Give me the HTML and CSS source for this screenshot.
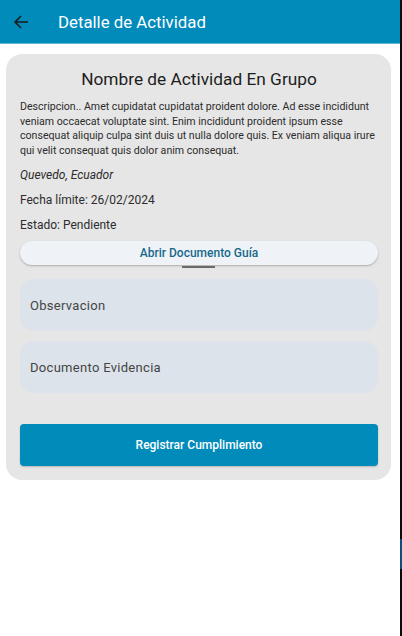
FILE: index.html
```html
<!DOCTYPE html>
<html lang="es">
<head>
<meta charset="utf-8">
<link rel="stylesheet" href="styles.css">
</head>
<body>
<div class="screen">
  <header class="appbar">
    <svg class="back" width="16" height="16" viewBox="0 0 16 16"><path d="M15 8H2M8 2L2 8l6 6" fill="none" stroke="#1b1b1b" stroke-width="1.6"/></svg>
    <h1 class="appbar-title">Detalle de Actividad</h1>
  </header>
  <main class="content">
    <section class="card">
      <h2 class="card-title">Nombre de Actividad En Grupo</h2>
      <p class="desc">Descripcion.. Amet cupidatat cupidatat proident dolore. Ad esse incididunt veniam occaecat voluptate sint. Enim incididunt proident ipsum esse consequat aliquip culpa sint duis ut nulla dolore quis. Ex veniam aliqua irure qui velit consequat quis dolor anim consequat.</p>
      <p class="info italic">Quevedo, Ecuador</p>
      <p class="info">Fecha límite: 26/02/2024</p>
      <p class="info">Estado: Pendiente</p>
      <div class="guide-wrap">
        <button class="guide">Abrir Documento Guía</button>
        <span class="indicator"></span>
      </div>
      <div class="field">Observacion</div>
      <div class="field">Documento Evidencia</div>
      <button class="submit">Registrar Cumplimiento</button>
    </section>
  </main>
  <div class="edge"><span class="edge-blue"></span></div>
</div>
</body>
</html>
```
FILE: styles.css
```css
* { box-sizing: border-box; }
html, body { margin: 0; padding: 0; background: #fff; }
body { font-family: Roboto, "Noto Sans", sans-serif; width: 402px; height: 636px; overflow: hidden; }
.screen { position: relative; width: 402px; height: 636px; }
.edge { position: absolute; top: 0; right: 0; width: 2px; height: 636px; background: #0b0b0b; }
.edge-blue { position: absolute; top: 539px; left: 0; width: 2px; height: 30px; background: #0d4d80; }
.appbar { height: 44px; width: 400px; background: #008bbb; display: flex; align-items: center; border-bottom: 1px solid #5fb6d6; }
.back { margin-left: 13px; }
.appbar-title { margin: 0 0 0 29px; font-size: 16.8px; font-weight: 400; color: #fff; }
.content { padding: 10px 11px 0 6px; }
.card { background: #e6e6e6; border-radius: 16px; padding: 13px 13px 14px 14px; display: flex; flex-direction: column; }
.card-title { margin: 0; text-align: center; font-size: 17.3px; font-weight: 400; color: #1e1e1e; line-height: 24px; }
.desc { margin: 9px 0 0; font-size: 10.6px; line-height: 14.5px; color: #2c2c2c; }
.info { margin: 7px 0 0; font-size: 12px; line-height: 18px; color: #2c2c2c; }
.info + .info { margin-top: 7px; }
.italic { font-style: italic; margin-top: 8px; }
.guide-wrap { position: relative; margin-top: 7px; }
.guide { display: block; width: 100%; height: 24px; border: none; border-radius: 12px; background: #eff3f7; color: #17698c; font-family: inherit; font-size: 12px; font-weight: 500; box-shadow: 0 1px 2px rgba(0,0,0,0.25); }
.indicator { position: absolute; left: 162px; top: 25px; width: 33px; height: 2px; background: #6a6a6a; }
.field { margin-top: 14px; height: 52px; border-radius: 14px; background: #dce3ea; display: flex; align-items: center; padding-left: 10px; font-size: 13px; letter-spacing: 0.3px; color: #454545; }
.field + .field { margin-top: 10px; }
.submit { margin-top: 31px; height: 42px; border: none; border-radius: 4px; background: #008bbb; color: #fff; font-family: inherit; font-size: 12px; font-weight: 500; box-shadow: 0 1px 2px rgba(0,0,0,0.2); }
```
